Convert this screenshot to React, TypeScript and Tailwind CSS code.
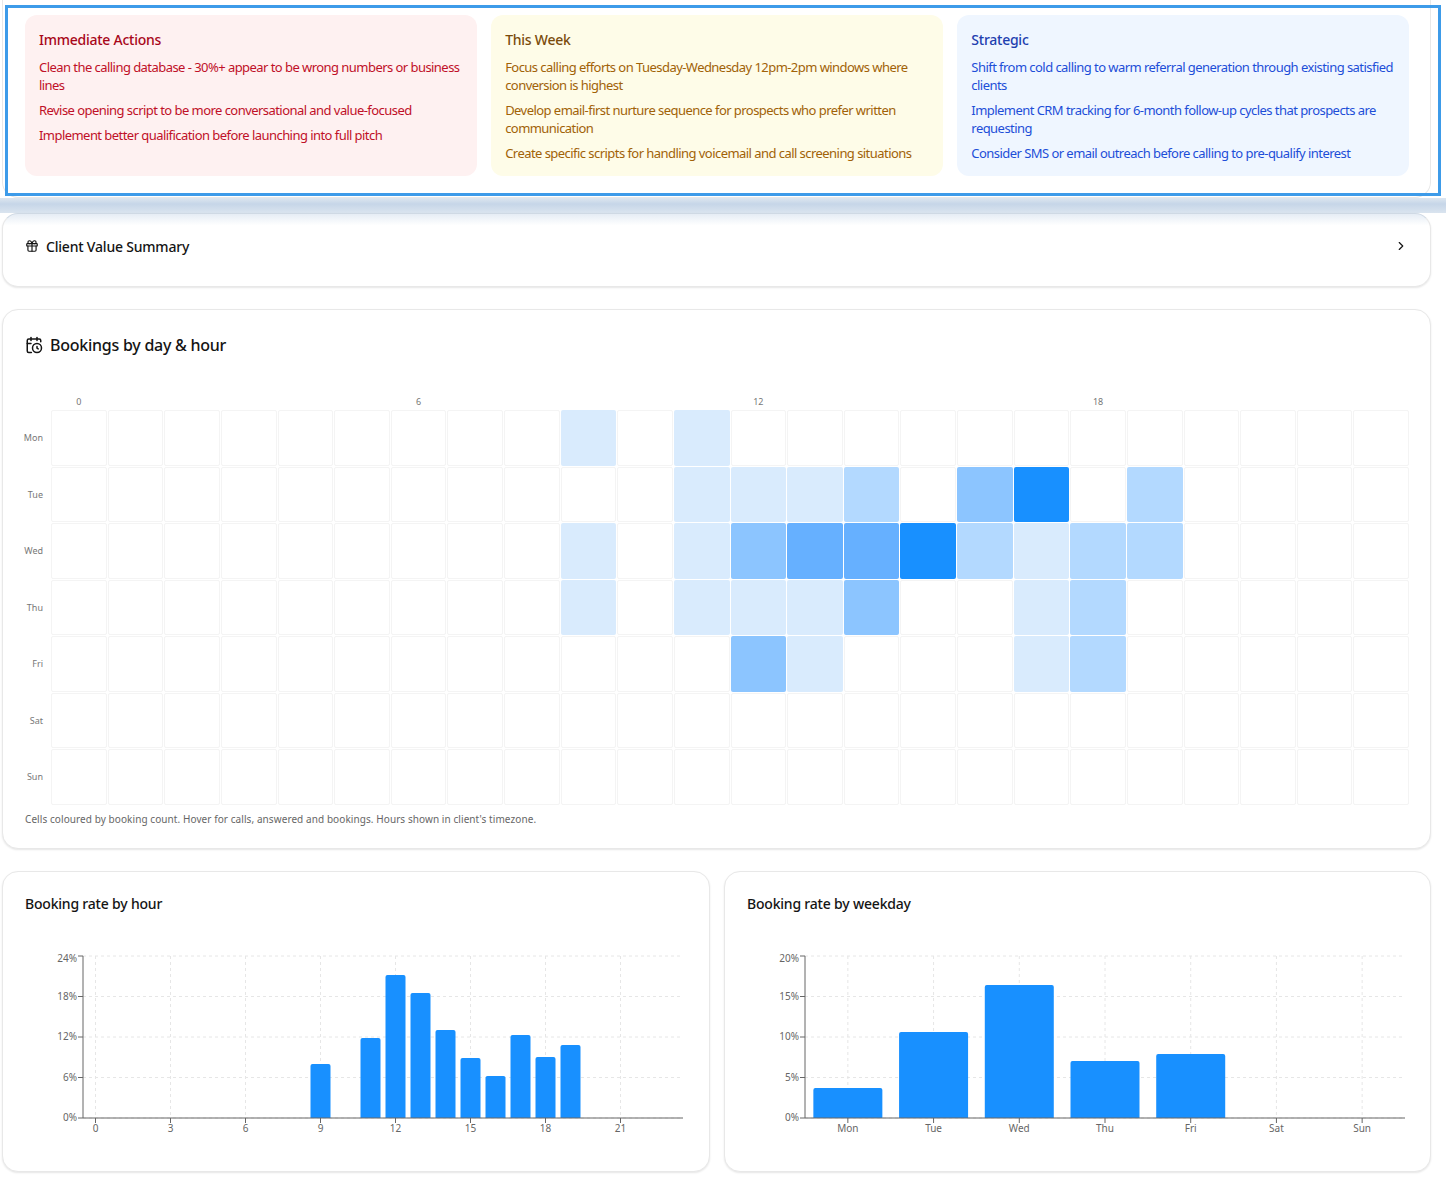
import { CalendarClock, ChevronRight, Gift } from 'lucide-react';

const FONT = "font-['Noto_Sans',sans-serif]";

const actionCards = [
  {
    title: 'Immediate Actions',
    box: 'bg-[#fef1f1]',
    head: 'text-[#a8071a]',
    body: 'text-[#c01028]',
    items: [
      'Clean the calling database - 30%+ appear to be wrong numbers or business lines',
      'Revise opening script to be more conversational and value-focused',
      'Implement better qualification before launching into full pitch',
    ],
  },
  {
    title: 'This Week',
    box: 'bg-[#fefce8]',
    head: 'text-[#7a4b0c]',
    body: 'text-[#a16207]',
    items: [
      'Focus calling efforts on Tuesday-Wednesday 12pm-2pm windows where conversion is highest',
      'Develop email-first nurture sequence for prospects who prefer written communication',
      'Create specific scripts for handling voicemail and call screening situations',
    ],
  },
  {
    title: 'Strategic',
    box: 'bg-[#eff6ff]',
    head: 'text-[#1e40af]',
    body: 'text-[#1d4ed8]',
    items: [
      'Shift from cold calling to warm referral generation through existing satisfied clients',
      'Implement CRM tracking for 6-month follow-up cycles that prospects are requesting',
      'Consider SMS or email outreach before calling to pre-qualify interest',
    ],
  },
];

const days = ['Mon', 'Tue', 'Wed', 'Thu', 'Fri', 'Sat', 'Sun'];

// booking level per [day][hour], 0 = none, 5 = max
const heat: Record<number, Record<number, number>> = {
  0: { 9: 1, 11: 1 },
  1: { 11: 1, 12: 1, 13: 1, 14: 2, 16: 3, 17: 5, 19: 2 },
  2: { 9: 1, 11: 1, 12: 3, 13: 4, 14: 4, 15: 5, 16: 2, 17: 1, 18: 2, 19: 2 },
  3: { 9: 1, 11: 1, 12: 1, 13: 1, 14: 3, 17: 1, 18: 2 },
  4: { 12: 3, 13: 1, 17: 1, 18: 2 },
};

const levelClass = [
  'border border-[#f4f4f4] bg-white',
  'bg-[#d9ebfd]',
  'bg-[#b3d9ff]',
  'bg-[#8cc5ff]',
  'bg-[#66b0ff]',
  'bg-[#1890ff]',
];

function Card({ className = '', children }: { className?: string; children: React.ReactNode }) {
  return (
    <div className={`rounded-2xl border border-[#e8e8e8] bg-white shadow-[0_1px_2px_rgba(0,0,0,0.1)] ${className}`}>
      {children}
    </div>
  );
}

interface BarChartProps {
  labels: string[];
  tickEvery: number;
  bars: { index: number; top: number }[];
  yTicks: string[];
  barWidth: number;
  radius: number;
}

// plot area is 600 wide, from x=58, y=11 to y=173
function BarChart({ labels, tickEvery, bars, yTicks, barWidth, radius }: BarChartProps) {
  const band = 600 / labels.length;
  const left = 58;
  const top = 11;
  const bottom = 173;
  const cx = (i: number) => left + band * i + band / 2;
  const tickLabels = labels.map((l, i) => ({ l, i })).filter((t) => t.i % tickEvery === 0);

  return (
    <svg width="662" height="190" className="block">
      {yTicks.map((_, i) => {
        const y = top + ((bottom - top) * i) / 4;
        return <line key={i} x1={left} x2={left + 600} y1={y} y2={y} stroke="#e6e6e6" strokeDasharray="3 3" />;
      })}
      {tickLabels.map((t) => (
        <line key={t.i} x1={cx(t.i)} x2={cx(t.i)} y1={top} y2={bottom} stroke="#e6e6e6" strokeDasharray="3 3" />
      ))}
      {bars.map((b) => (
        <path
          key={b.index}
          fill="#1890ff"
          d={`M${cx(b.index) - barWidth / 2} ${bottom}V${b.top + radius}q0 -${radius} ${radius} -${radius}H${cx(b.index) + barWidth / 2 - radius}q${radius} 0 ${radius} ${radius}V${bottom}Z`}
        />
      ))}
      <line x1={left} x2={left} y1={top} y2={bottom} stroke="#666666" />
      <line x1={left} x2={left + 600} y1={bottom} y2={bottom} stroke="#666666" />
      {yTicks.map((t, i) => {
        const y = top + ((bottom - top) * i) / 4;
        return (
          <g key={t}>
            <line x1={left - 5} x2={left} y1={y} y2={y} stroke="#666666" />
            <text x={left - 6} y={i === 0 ? y + 6 : y + 3} textAnchor="end" fontSize="10" fill="#666666">
              {t}
            </text>
          </g>
        );
      })}
      {tickLabels.map((t) => (
        <g key={t.i}>
          <line x1={cx(t.i)} x2={cx(t.i)} y1={bottom} y2={bottom + 5} stroke="#666666" />
          <text x={cx(t.i)} y={bottom + 14} textAnchor="middle" fontSize="10" fill="#666666">
            {t.l}
          </text>
        </g>
      ))}
    </svg>
  );
}

const hourBars = [
  { index: 9, top: 119 },
  { index: 11, top: 93 },
  { index: 12, top: 30 },
  { index: 13, top: 48 },
  { index: 14, top: 85 },
  { index: 15, top: 113 },
  { index: 16, top: 131 },
  { index: 17, top: 90 },
  { index: 18, top: 112 },
  { index: 19, top: 100 },
];

const weekdayBars = [
  { index: 0, top: 143 },
  { index: 1, top: 87 },
  { index: 2, top: 40 },
  { index: 3, top: 116 },
  { index: 4, top: 109 },
];

export default function App() {
  return (
    <div className={`${FONT} w-[1446px] h-[1181px] overflow-hidden bg-white text-[#141414]`}>
      <div className="px-[2px]">
        {/* inspected element highlight sits over this card */}
        <div className="relative w-[1429px] h-[198px] rounded-b-2xl border-x border-b border-[#e8e8e8] bg-white pt-[15px] pl-[22px] pr-[21px]">
          <div className="grid grid-cols-3 gap-[14.5px]">
            {actionCards.map((card) => (
              <div key={card.title} className={`h-[161px] rounded-xl pl-[14px] pr-[8px] pt-[15px] ${card.box}`}>
                <h4 className={`mb-[8px] text-[14px] leading-[20px] font-medium tracking-[-0.25px] ${card.head}`}>
                  {card.title}
                </h4>
                <div className={`flex flex-col gap-[7px] text-[13px] leading-[18px] tracking-[-0.55px] ${card.body}`}>
                  {card.items.map((item) => (
                    <p key={item}>{item}</p>
                  ))}
                </div>
              </div>
            ))}
          </div>
          <div className="absolute left-[2px] top-[5px] w-[1436px] h-[191px] border-[3px] border-[#3d9be9] pointer-events-none" />
        </div>
      </div>

      <div className="h-[15px] bg-gradient-to-b from-[#dde6f0] via-[#c6d6e8] via-[40%] to-[#dae4ef]" />

      <div className="flex flex-col gap-[22px] px-[2px]">
        <Card className="w-[1429px] h-[74px] flex items-center justify-between border-t-[#cfd9e4] pl-[22px] pr-[22px] pb-[8px] bg-gradient-to-b from-[#e6edf5] via-white via-[16%] to-white">
          <div className="flex items-center gap-[7px] text-[14px] font-medium tracking-[-0.2px]">
            <Gift size={14} strokeWidth={2} />
            <span>Client Value Summary</span>
          </div>
          <ChevronRight size={14} strokeWidth={2} />
        </Card>

        <Card className="w-[1429px] h-[540px] pl-[22px] pr-[21px] pt-[23px]">
          <div className="flex items-center gap-[7px] text-[16px] leading-[24px] font-medium tracking-[-0.25px]">
            <CalendarClock size={18} strokeWidth={2} />
            <span>Bookings by day &amp; hour</span>
          </div>
          <div className="mt-[37px] grid grid-cols-[25px_repeat(24,minmax(0,1fr))] gap-[1px] text-[9px] text-[#777777]">
            <div className="h-[15px]" />
            {Array.from({ length: 24 }).map((_, h) => (
              <div key={h} className="h-[15px] text-center leading-[16px]">
                {h % 6 === 0 ? h : ''}
              </div>
            ))}
            {days.map((d, di) => (
              <div key={d} className="contents">
                <div className="flex h-[55.5px] items-center justify-end pr-[7px]">{d}</div>
                {Array.from({ length: 24 }).map((_, h) => (
                  <div key={h} className={`h-[55.5px] rounded-[2px] ${levelClass[heat[di]?.[h] ?? 0]}`} />
                ))}
              </div>
            ))}
          </div>
          <p className="mt-[6px] text-[10px] leading-[16px] tracking-[0.08px] text-[#666666]">
            Cells coloured by booking count. Hover for calls, answered and bookings. Hours shown in client's timezone.
          </p>
        </Card>

        <div className="flex w-[1429px] gap-[14px]">
          <Card className="w-[708px] h-[301px] pl-[22px] pt-[22px]">
            <h4 className="h-[51px] text-[14px] leading-[20px] font-medium tracking-[-0.2px]">Booking rate by hour</h4>
            <BarChart
              labels={Array.from({ length: 24 }, (_, i) => String(i))}
              tickEvery={3}
              bars={hourBars}
              yTicks={['24%', '18%', '12%', '6%', '0%']}
              barWidth={20}
              radius={2}
            />
          </Card>
          <Card className="w-[707px] h-[301px] pl-[22px] pt-[22px]">
            <h4 className="h-[51px] text-[14px] leading-[20px] font-medium tracking-[-0.2px]">Booking rate by weekday</h4>
            <BarChart
              labels={days}
              tickEvery={1}
              bars={weekdayBars}
              yTicks={['20%', '15%', '10%', '5%', '0%']}
              barWidth={69}
              radius={2}
            />
          </Card>
        </div>
      </div>
    </div>
  );
}
